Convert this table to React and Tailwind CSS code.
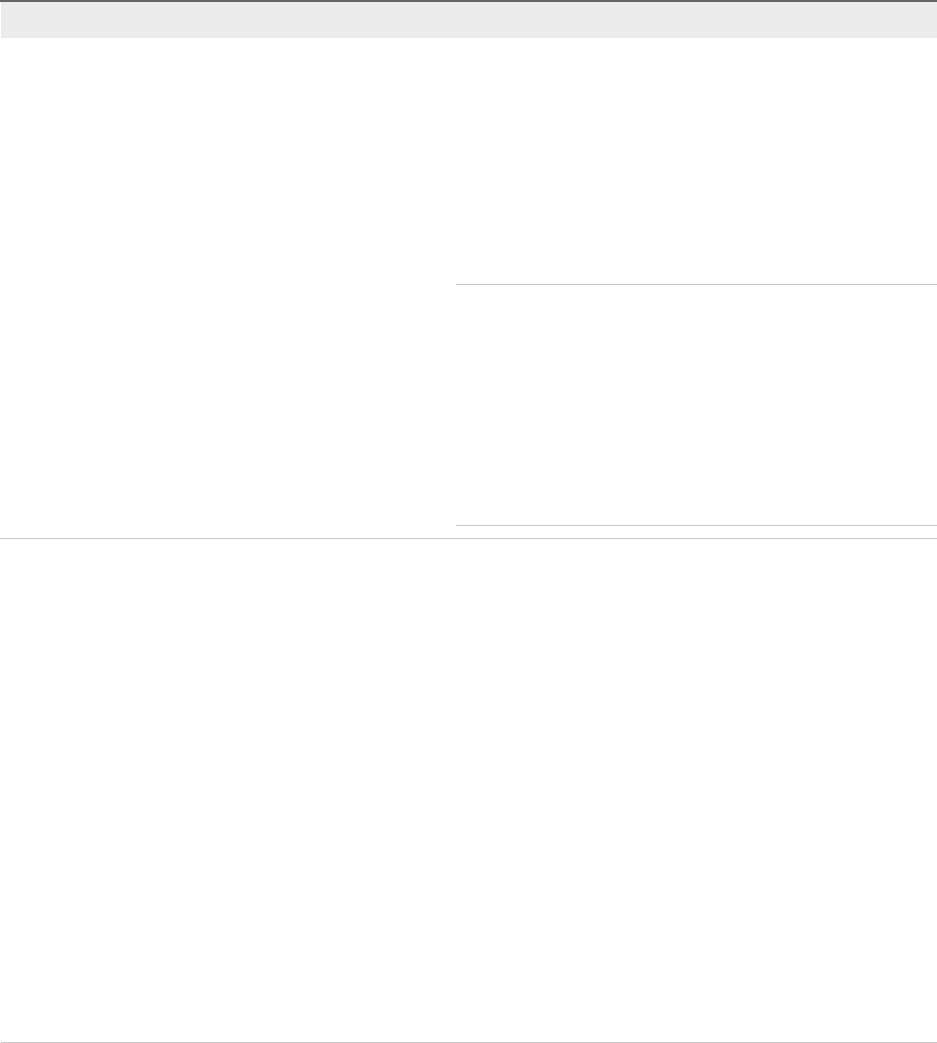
export default function App() {
  return (
    <div className="w-[937px] bg-white font-['Liberation_Sans',sans-serif]">
      <div className="border-t-2 border-[#666666]">
        <div className="ml-px h-[36px] bg-[#ececec]" />
      </div>

      <div className="flex h-[501px] border-b border-[#c8c8c8]">
        <div className="w-[456px]" />
        <div className="flex flex-1 flex-col">
          <div className="h-[247px] border-b border-[#c8c8c8]" />
          <div className="h-[241px] border-b border-[#c8c8c8]" />
        </div>
      </div>

      <div className="ml-px h-[504px] border-b border-[#c8c8c8]" />
    </div>
  );
}
